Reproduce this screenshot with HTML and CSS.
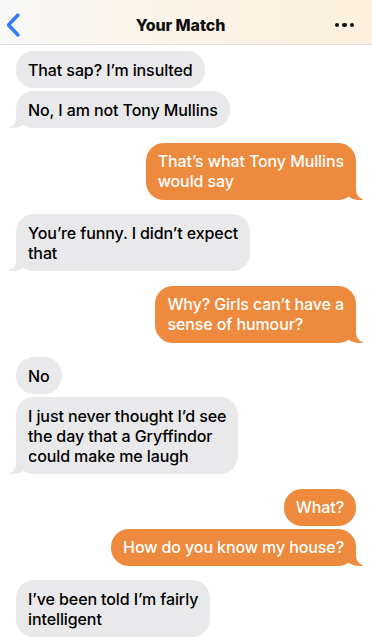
FILE: index.html
```html
<!DOCTYPE html>
<html lang="en">
<head>
  <meta charset="UTF-8">
  <title>Your Match</title>
  <link rel="stylesheet" href="styles.css">
</head>
<body>

<div class="topbar">
  <a class="back">
    <svg width="18" height="26" viewBox="0 0 18 26"><path d="M14 3 L4.5 13 L14 23" fill="none" stroke="#2f7df6" stroke-width="3.4" stroke-linecap="round" stroke-linejoin="round"/></svg>
  </a>
  <div class="title">Your Match</div>
  <a class="more"><span></span><span></span><span></span></a>
</div>

<!-- Conversation -->
<div class="chat">
  <div class="msg in">That sap? I’m insulted</div>
  <div class="msg in tail">No, I am not Tony Mullins</div>

  <div class="msg out tail gap">That’s what Tony Mullins<br>would say</div>

  <div class="msg in tail gap">You’re funny. I didn’t expect<br>that</div>

  <div class="msg out tail gap">Why? Girls can’t have a<br>sense of humour?</div>

  <div class="msg in gap">No</div>
  <div class="msg in tail">I just never thought I’d see<br>the day that a Gryffindor<br>could make me laugh</div>

  <div class="msg out gap">What?</div>
  <div class="msg out tail">How do you know my house?</div>

  <div class="msg in gap">I’ve been told I’m fairly<br>intelligent</div>
</div>

</body>
</html>
```

FILE: styles.css
```css
body {
  margin: 0;
  background: #fff;
  font-family: Inter, "Noto Sans", sans-serif;
  overflow: hidden;
}

.topbar {
  box-sizing: border-box;
  height: 45px;
  display: flex;
  align-items: center;
  justify-content: space-between;
  padding: 5px 17px 0 4px;
  background: linear-gradient(90deg, #f8f8f8 0%, #fbf4e8 45%, #fdf1de 100%);
  border-bottom: 1px solid #dcdcdc;
}

.back {
  display: flex;
  width: 18px;
  height: 26px;
}

.title {
  font-weight: 800;
  font-size: 16px;
  color: #111;
  letter-spacing: -0.1px;
  padding-left: 4px;
}

.more {
  display: flex;
  gap: 3px;
  width: 20px;
  padding-top: 1px;
}

.more span {
  width: 4.5px;
  height: 4.5px;
  border-radius: 50%;
  background: #111;
}

.chat {
  display: flex;
  flex-direction: column;
  gap: 3px;
  padding: 6px 16px 0 16px;
}

.msg {
  position: relative;
  max-width: 260px;
  padding: 8.5px 12px;
  border-radius: 18px;
  font-size: 16px;
  font-weight: 500;
  line-height: 20px;
  letter-spacing: -0.1px;
}

.msg.gap {
  margin-top: 11.5px;
}

.in {
  align-self: flex-start;
  background: #e9e9eb;
  color: #000;
}

.out {
  align-self: flex-end;
  background: #ee8a3e;
  color: #fff;
}

/* bubble tails */
.tail::before,
.tail::after {
  content: "";
  position: absolute;
  bottom: 0;
  height: 20px;
}

.in.tail::before {
  left: -7px;
  width: 20px;
  background: #e9e9eb;
  border-bottom-right-radius: 15px;
}

.in.tail::after {
  left: -10px;
  width: 10px;
  background: #fff;
  border-bottom-right-radius: 10px;
}

.out.tail::before {
  right: -7px;
  width: 20px;
  background: #ee8a3e;
  border-bottom-left-radius: 15px;
}

.out.tail::after {
  right: -10px;
  width: 10px;
  background: #fff;
  border-bottom-left-radius: 10px;
}
```
